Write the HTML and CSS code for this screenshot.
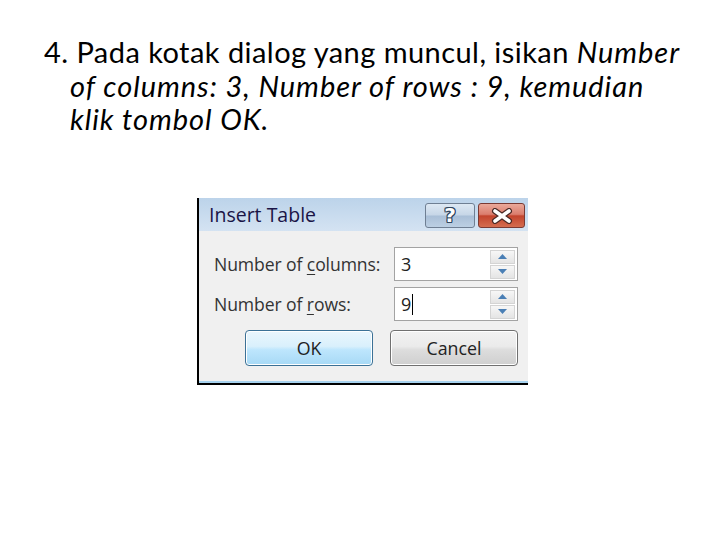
FILE: index.html
```html
<!DOCTYPE html>
<html>
<head>
<meta charset="utf-8">
<link rel="stylesheet" href="styles.css">
</head>
<body>
<div class="slide">
  <p class="step">4. Pada kotak dialog yang muncul, isikan <em>Number<br>of columns: 3, Number of rows : 9, kemudian<br>klik tombol OK.</em></p>
  <div class="dialog">
    <div class="titlebar">
      <span class="title">Insert Table</span>
      <div class="caption">
        <span class="cbtn help">?</span>
        <span class="cbtn close">
          <svg width="24" height="16" viewBox="0 0 24 16"><path d="M5 3 L19 13 M19 3 L5 13" stroke="#4a2a26" stroke-width="6" stroke-linecap="round"/><path d="M5 3 L19 13 M19 3 L5 13" stroke="#fff" stroke-width="3.6" stroke-linecap="round"/></svg>
        </span>
      </div>
    </div>
    <div class="body">
      <div class="row">
        <span class="label">Number of <u>c</u>olumns:</span>
        <div class="spin">
          <span class="val">3</span>
          <div class="arrows">
            <span class="arr"><svg width="9" height="5" viewBox="0 0 9 5"><path d="M0 5 L4.5 0 L9 5Z" fill="#4a7fb5"/></svg></span>
            <span class="arr"><svg width="9" height="5" viewBox="0 0 9 5"><path d="M0 0 L4.5 5 L9 0Z" fill="#4a7fb5"/></svg></span>
          </div>
        </div>
      </div>
      <div class="row">
        <span class="label">Number of <u>r</u>ows:</span>
        <div class="spin">
          <span class="val">9<span class="caret"></span></span>
          <div class="arrows">
            <span class="arr"><svg width="9" height="5" viewBox="0 0 9 5"><path d="M0 5 L4.5 0 L9 5Z" fill="#4a7fb5"/></svg></span>
            <span class="arr"><svg width="9" height="5" viewBox="0 0 9 5"><path d="M0 0 L4.5 5 L9 0Z" fill="#4a7fb5"/></svg></span>
          </div>
        </div>
      </div>
      <div class="buttons">
        <span class="btn ok">OK</span>
        <span class="btn cancel">Cancel</span>
      </div>
    </div>
  </div>
</div>
</body>
</html>
```
FILE: styles.css
```css
html, body {
  margin: 0;
  padding: 0;
  background: #fff;
}
.slide {
  width: 720px;
  height: 540px;
  overflow: hidden;
}
.step {
  box-sizing: border-box;
  height: 150px;
  margin: 0;
  padding: 35px 0 0 70px;
  text-indent: -26px;
  font-family: "Lato", "Open Sans", sans-serif;
  font-size: 29px;
  line-height: 33.5px;
  letter-spacing: 0.45px;
  color: #000;
}
.step em {
  font-style: italic;
  letter-spacing: 0.95px;
}
.dialog {
  margin: 48px 0 0 197px;
  width: 329px;
  height: 185px;
  border-left: 2px solid #000;
  border-bottom: 2px solid #000;
  display: flex;
  flex-direction: column;
  font-family: "Open Sans", "DejaVu Sans", sans-serif;
}
.titlebar {
  height: 33px;
  flex: none;
  display: flex;
  align-items: flex-start;
  background: linear-gradient(#bcd3ea, #d4e3f2);
}
.title {
  margin: 5px 0 0 10px;
  font-size: 19.5px;
  line-height: 24px;
  color: #1a1446;
}
.caption {
  margin-left: auto;
  margin-top: 5px;
  margin-right: 3px;
  display: flex;
  gap: 3px;
}
.cbtn {
  box-sizing: border-box;
  height: 25px;
  border: 1px solid #6f7f93;
  border-radius: 3px;
  display: flex;
  align-items: center;
  justify-content: center;
}
.help {
  width: 50px;
  background: linear-gradient(#dde8f3 0%, #c6d6e7 48%, #a9bfd7 52%, #bccfe3 100%);
  font-family: "DejaVu Sans", sans-serif;
  font-weight: bold;
  font-size: 20px;
  line-height: 23px;
  color: #fff;
  text-shadow: 1px 0 0 #30455e, -1px 0 0 #30455e, 0 1px 0 #30455e, 0 -1px 0 #30455e, 1px 1px 0 #30455e, -1px -1px 0 #30455e, 1px -1px 0 #30455e, -1px 1px 0 #30455e;
}
.close {
  width: 47px;
  border-color: #7a3a33;
  background: linear-gradient(#eaa99a 0%, #db7d6d 45%, #c3442d 52%, #d46d50 100%);
}
.body {
  flex: 1;
  background: #f0f0f0;
  padding: 16px 10px 0 15px;
  display: flex;
  flex-direction: column;
  border-bottom: 2px solid #a7d2ee;
}
.row {
  display: flex;
  align-items: center;
  justify-content: space-between;
  height: 34px;
  margin-bottom: 6px;
}
.label {
  font-size: 17.6px;
  color: #333;
  letter-spacing: -0.1px;
}
.label u {
  text-decoration-thickness: 1px;
  text-underline-offset: 3px;
}
.spin {
  box-sizing: border-box;
  width: 124px;
  height: 34px;
  border: 1px solid #a3a3a3;
  background: #fff;
  display: flex;
  align-items: center;
  padding: 0 2px 0 6px;
}
.val {
  flex: 1;
  font-size: 18px;
  color: #222;
  display: flex;
  align-items: center;
}
.caret {
  width: 1px;
  height: 21px;
  background: #000;
  margin-left: 1px;
}
.arrows {
  width: 25px;
  height: 29px;
  display: flex;
  flex-direction: column;
  gap: 1px;
}
.arr {
  flex: 1;
  border: 1px solid #d4d4d4;
  background: linear-gradient(#f7f7f7, #e4e4e4);
  display: flex;
  align-items: center;
  justify-content: center;
}
.buttons {
  display: flex;
  justify-content: space-between;
  margin: 3px 0 0 31px;
}
.btn {
  box-sizing: border-box;
  width: 128px;
  height: 36px;
  border-radius: 4px;
  display: flex;
  align-items: center;
  justify-content: center;
  font-size: 17.8px;
  color: #222;
}
.ok {
  border: 1px solid #3c7196;
  background: linear-gradient(#eaf6fd 0%, #d9f0fc 45%, #bee6fd 55%, #a7d9f5 100%);
  box-shadow: inset 0 0 0 1px #fff;
}
.cancel {
  border: 1px solid #707070;
  background: linear-gradient(#f2f2f2 0%, #ebebeb 45%, #dddddd 55%, #cfcfcf 100%);
  box-shadow: inset 0 0 0 1px #fff;
}
```
